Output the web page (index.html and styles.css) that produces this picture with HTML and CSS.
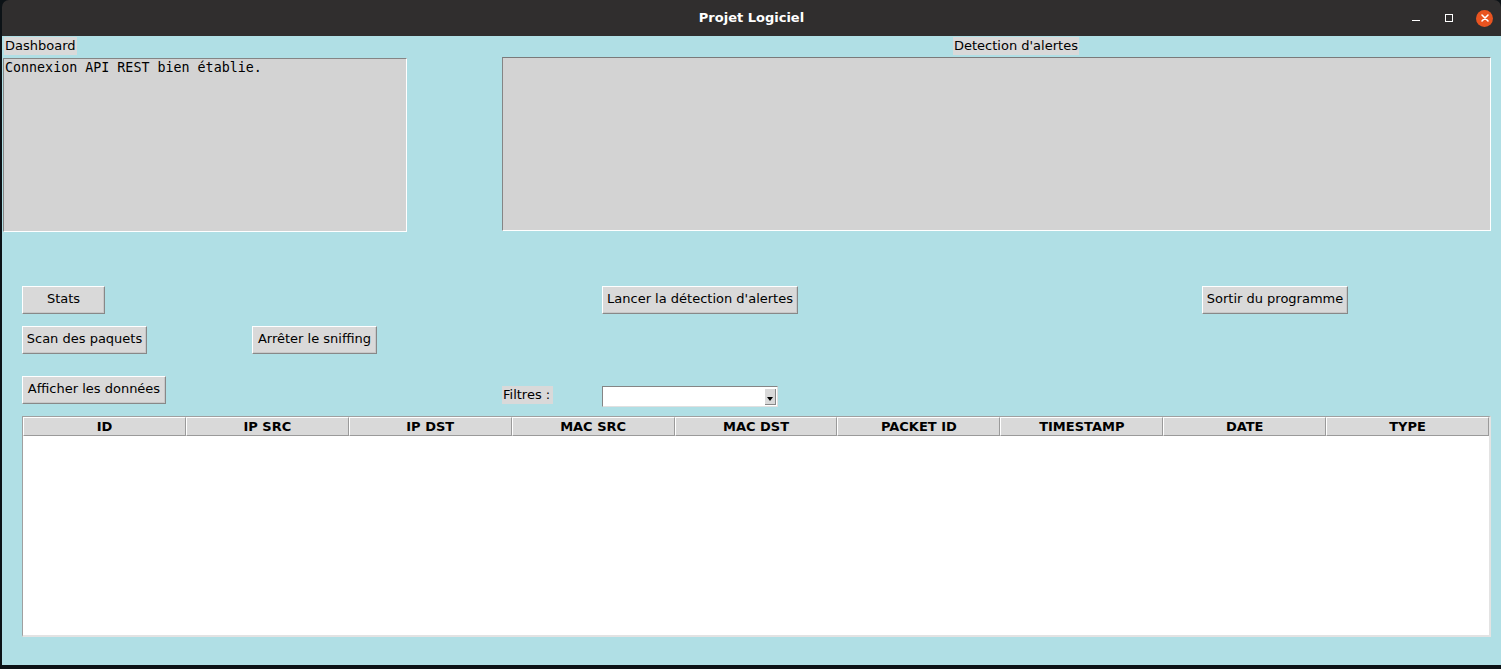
FILE: index.html
```html
<!DOCTYPE html>
<html lang="fr">
<head>
<meta charset="utf-8">
<title>Projet Logiciel</title>
<link rel="stylesheet" href="styles.css">
</head>
<body>
<div class="window">
  <header class="titlebar">
    <span class="title">Projet Logiciel</span>
    <div class="controls">
      <span class="ctl min"></span>
      <span class="ctl max"></span>
      <span class="ctl close">
        <svg width="16" height="16" viewBox="0 0 16 16"><path d="M5 5 L11 11 M11 5 L5 11" stroke="#fff" stroke-width="1.6" stroke-linecap="round"/></svg>
      </span>
    </div>
  </header>
  <main class="content">
    <section class="top">
      <div class="panel panel-left">
        <div class="label label-dash">Dashboard</div>
        <div class="textbox textbox-dash">Connexion API REST bien établie.</div>
      </div>
      <div class="panel panel-right">
        <div class="label label-alert">Detection d'alertes</div>
        <div class="textbox textbox-alert"></div>
      </div>
    </section>
    <section class="row row1">
      <button class="btn btn-stats">Stats</button>
      <button class="btn btn-lancer">Lancer la détection d'alertes</button>
      <button class="btn btn-sortir">Sortir du programme</button>
    </section>
    <section class="row row2">
      <button class="btn btn-scan">Scan des paquets</button>
      <button class="btn btn-stop">Arrêter le sniffing</button>
    </section>
    <section class="row row3">
      <button class="btn btn-afficher">Afficher les données</button>
      <div class="label label-filtres">Filtres :</div>
      <div class="combo"><span class="combo-arrow"><span class="tri"></span></span></div>
    </section>
    <section class="table">
      <div class="thead">
        <div class="th">ID</div>
        <div class="th">IP SRC</div>
        <div class="th">IP DST</div>
        <div class="th">MAC SRC</div>
        <div class="th">MAC DST</div>
        <div class="th">PACKET ID</div>
        <div class="th">TIMESTAMP</div>
        <div class="th">DATE</div>
        <div class="th">TYPE</div>
      </div>
      <div class="tbody"></div>
    </section>
  </main>
</div>
</body>
</html>
```
FILE: styles.css
```css
* { box-sizing: border-box; }
html, body { margin: 0; padding: 0; }
body {
  background: #0c1216;
  width: 1501px;
  height: 669px;
  overflow: hidden;
  font-family: "DejaVu Sans", "Liberation Sans", sans-serif;
  font-size: 13px;
  color: #000;
}
.window {
  margin-left: 2px;
  width: 1499px;
  height: 665px;
  display: flex;
  flex-direction: column;
}
.titlebar {
  height: 36px;
  background: #302e2e;
  border-radius: 7px 7px 0 0;
  position: relative;
  display: flex;
  align-items: center;
  justify-content: center;
}
.title {
  color: #fff;
  font-weight: bold;
  font-size: 13px;
  margin-top: -2px;
}
.controls {
  position: absolute;
  right: 0;
  top: 0;
  height: 36px;
  display: flex;
  align-items: center;
}
.ctl { display: block; }
.min {
  width: 8px;
  height: 1px;
  background: #fff;
  margin-right: 25px;
  margin-top: 4px;
}
.max {
  width: 8px;
  height: 8px;
  border: 1px solid #fff;
  margin-right: 23px;
}
.close {
  width: 17px;
  height: 17px;
  border-radius: 50%;
  background: #e95420;
  margin-right: 8px;
  display: flex;
  align-items: center;
  justify-content: center;
}
.close svg { display: block; }
.content {
  flex: 1;
  background: #b0dfe5;
  display: flex;
  flex-direction: column;
}
.top { display: flex; }
.panel { display: flex; flex-direction: column; align-items: flex-start; }
.panel-left { margin-left: 1px; width: 404px; }
.panel-right { margin-left: 95px; width: 989px; }
.label {
  background: #d9d9d9;
  height: 18px;
  line-height: 18px;
  padding: 0 1px;
  white-space: nowrap;
}
.label-dash { margin-top: 1px; margin-left: 1px; }
.label-alert { margin-top: 1px; margin-left: 451px; }
.textbox {
  width: 100%;
  height: 174px;
  background: #d3d3d3;
  border-top: 1px solid #858585;
  border-left: 1px solid #858585;
  border-bottom: 1px solid #fff;
  border-right: 1px solid #fff;
  font-family: "DejaVu Sans Mono", "Liberation Mono", monospace;
  font-size: 13.33px;
  line-height: 17px;
  padding: 0 1px;
}
.textbox-dash { margin-top: 3px; }
.textbox-alert { margin-top: 2px; border-top-color: #7a7a7a; }
.row { display: flex; align-items: flex-start; }
.row1 { margin-top: 54px; }
.row2 { margin-top: 12px; }
.row3 { margin-top: 22px; height: 40px; }
.btn {
  font-family: "DejaVu Sans", "Liberation Sans", sans-serif;
  font-size: 13px;
  color: #000;
  height: 28px;
  background: #d9d9d9;
  border-top: 1px solid #fff;
  border-left: 1px solid #fff;
  border-bottom: 1px solid #888;
  border-right: 1px solid #888;
  box-shadow: inset -1px -1px 0 #c8c8c8;
  padding: 0 0 3px 0;
  margin: 0;
  text-align: center;
  white-space: nowrap;
}
.btn-stats { margin-left: 20px; width: 83px; }
.btn-lancer { margin-left: 497px; width: 196px; }
.btn-sortir { margin-left: 404px; width: 146px; }
.btn-scan { margin-left: 20px; width: 125px; }
.btn-stop { margin-left: 105px; width: 125px; }
.btn-afficher { margin-left: 20px; width: 144px; }
.label-filtres { margin-left: 336px; margin-top: 10px; width: 51px; padding: 0 0 0 1px; }
.combo {
  margin-left: 49px;
  margin-top: 10px;
  width: 176px;
  height: 21px;
  background: #fff;
  border-top: 1px solid #858585;
  border-left: 1px solid #858585;
  border-bottom: 1px solid #e0e0e0;
  border-right: 1px solid #e0e0e0;
  display: flex;
  justify-content: flex-end;
  padding: 2px 1px 1px 0;
}
.combo-arrow {
  width: 11px;
  height: 100%;
  background: #d9d9d9;
  border-bottom: 1px solid #888;
  border-right: 1px solid #888;
  display: flex;
  align-items: flex-end;
  justify-content: center;
  padding-bottom: 3px;
}
.tri {
  width: 0;
  height: 0;
  border-left: 3px solid transparent;
  border-right: 3px solid transparent;
  border-top: 4px solid #000;
}
.table {
  margin-left: 20px;
  width: 1469px;
  height: 221px;
  background: #fff;
  border-top: 1px solid #a0a0a0;
  border-left: 1px solid #a0a0a0;
  border-bottom: 2px solid #e3e3e3;
  border-right: 2px solid #e3e3e3;
  display: flex;
  flex-direction: column;
}
.thead { display: flex; height: 19px; }
.th {
  width: 163px;
  height: 19px;
  background: #d9d9d9;
  border-left: 1px solid #fff;
  border-top: 1px solid #fff;
  border-right: 1px solid #9a9a9a;
  border-bottom: 1px solid #9a9a9a;
  font-weight: bold;
  font-size: 13px;
  line-height: 17px;
  text-align: center;
}
.tbody { flex: 1; }
```
